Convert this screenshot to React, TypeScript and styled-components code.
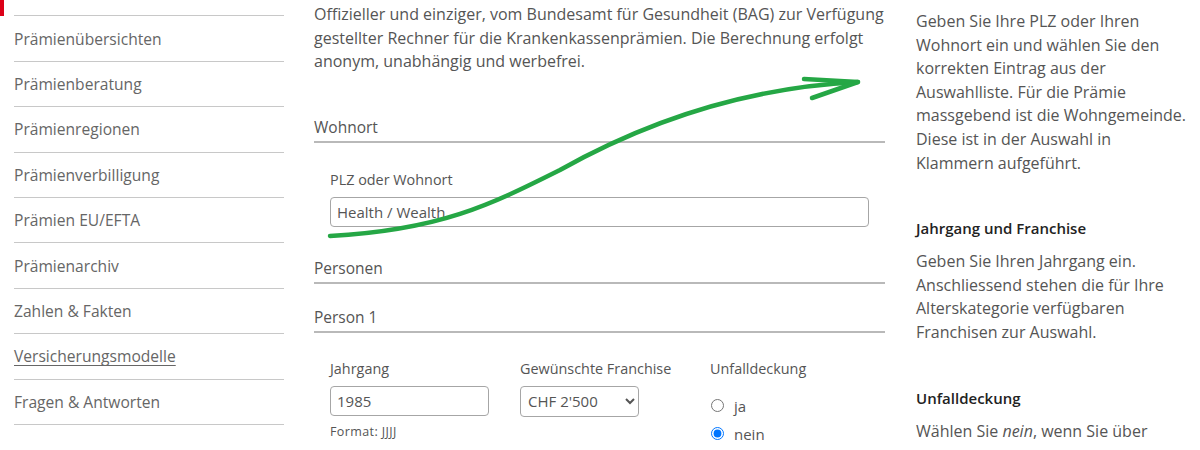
import styled, { createGlobalStyle } from 'styled-components';

const GlobalStyle = createGlobalStyle`
  body {
    margin: 0;
    background: #ffffff;
    font-family: "Open Sans", "Noto Sans", sans-serif;
    color: #555;
  }
`;

const Page = styled.div`
  position: relative;
  display: flex;
  width: 1200px;
  height: 450px;
  overflow: hidden;
  font-size: 15px;
`;

const Sidebar = styled.nav`
  width: 284px;
  flex-shrink: 0;
  margin-top: -29px;
`;

const NavItem = styled.div<{ $active?: boolean }>`
  display: flex;
  padding-left: 10px;
  border-left: 4px solid ${(p) => (p.$active ? '#dc0018' : 'transparent')};
`;

const NavLink = styled.a<{ $underline?: boolean }>`
  flex: 1;
  display: flex;
  align-items: center;
  box-sizing: border-box;
  height: 45.4px;
  border-bottom: 1px solid #c8c8c8;
  color: #666;
  font-size: 15.6px;
  text-decoration: ${(p) => (p.$underline ? 'underline' : 'none')};
  text-underline-offset: 3px;
`;

const Main = styled.main`
  width: 571px;
  flex-shrink: 0;
  margin-left: 30px;
  padding-top: 3px;
`;

const Intro = styled.p`
  margin: 0;
  font-size: 16px;
  line-height: 23.5px;
  color: #555;
`;

const SectionTitle = styled.div<{ $gap: number }>`
  margin-top: ${(p) => p.$gap}px;
  font-size: 15.5px;
  line-height: 23px;
  padding-bottom: 2px;
  border-bottom: 2px solid #b9b9b9;
  color: #555;
`;

const Field = styled.div<{ $gap?: number }>`
  margin-top: ${(p) => p.$gap ?? 0}px;
  padding: 0 16px;
`;

const Label = styled.div`
  font-size: 14.4px;
  line-height: 23px;
  margin-bottom: 6px;
  color: #555;
`;

const TextInput = styled.input<{ $width?: number }>`
  box-sizing: border-box;
  width: ${(p) => (p.$width ? `${p.$width}px` : '100%')};
  height: 30px;
  padding: 0 6px;
  border: 1px solid #a6a6a6;
  border-radius: 4px;
  font-family: inherit;
  font-size: 15px;
  color: #555;
  background: #fff;
`;

const Row = styled.div`
  display: flex;
  gap: 31px;
  margin-top: 24px;
  padding: 0 16px;
`;

const Col = styled.div<{ $width: number }>`
  width: ${(p) => p.$width}px;
`;

const Hint = styled.div`
  margin-top: 8px;
  font-size: 12.5px;
  line-height: 16px;
  letter-spacing: 0.4px;
  color: #555;
`;

const Select = styled.select`
  box-sizing: border-box;
  width: 119px;
  height: 31px;
  padding: 0 3px;
  border: 1px solid #a6a6a6;
  border-radius: 4px;
  font-family: inherit;
  font-size: 15px;
  color: #555;
  background: #fff;
`;

const RadioGroup = styled.div`
  margin-top: 12px;
`;

const RadioRow = styled.label`
  display: flex;
  align-items: center;
  gap: 10px;
  height: 28px;
  color: #555;

  input {
    width: 13px;
    height: 13px;
    margin: 0 0 0 1px;
  }
`;

const Aside = styled.aside`
  width: 280px;
  flex-shrink: 0;
  margin-left: 31px;
  padding-top: 10px;
`;

const HelpText = styled.p`
  margin: 0;
  font-size: 16px;
  line-height: 23.6px;
  color: #555;
  white-space: nowrap;
`;

const HelpTitle = styled.h3`
  margin: 41px 0 10px;
  font-size: 15px;
  line-height: 24px;
  font-weight: 600;
  color: #222;
`;

const Overlay = styled.svg`
  position: absolute;
  left: 0;
  top: 0;
  pointer-events: none;
`;

const navItems = [
  'Prämienrechner',
  'Prämienübersichten',
  'Prämienberatung',
  'Prämienregionen',
  'Prämienverbilligung',
  'Prämien EU/EFTA',
  'Prämienarchiv',
  'Zahlen & Fakten',
  'Versicherungsmodelle',
  'Fragen & Antworten',
];

function App() {
  return (
    <Page>
      <GlobalStyle />
      <Sidebar>
        {navItems.map((item, i) => (
          <NavItem key={item} $active={i === 0}>
            <NavLink $underline={item === 'Versicherungsmodelle'}>{item}</NavLink>
          </NavItem>
        ))}
      </Sidebar>

      <Main>
        <Intro>
          Offizieller und einziger, vom Bundesamt für Gesundheit (BAG) zur Verfügung
          <br />
          gestellter Rechner für die Krankenkassenprämien. Die Berechnung erfolgt
          <br />
          anonym, unabhängig und werbefrei.
        </Intro>

        <SectionTitle $gap={42}>Wohnort</SectionTitle>
        <Field $gap={25}>
          <Label>PLZ oder Wohnort</Label>
          <TextInput defaultValue="Health / Wealth" />
        </Field>

        <SectionTitle $gap={30}>Personen</SectionTitle>
        <SectionTitle $gap={22}>Person 1</SectionTitle>

        <Row>
          <Col $width={159}>
            <Label>Jahrgang</Label>
            <TextInput defaultValue="1985" />
            <Hint>Format: JJJJ</Hint>
          </Col>
          <Col $width={159}>
            <Label>Gewünschte Franchise</Label>
            <Select defaultValue="2500">
              <option value="2500">CHF 2'500</option>
            </Select>
          </Col>
          <Col $width={150}>
            <Label>Unfalldeckung</Label>
            <RadioGroup>
              <RadioRow>
                <input type="radio" name="unfall" /> ja
              </RadioRow>
              <RadioRow>
                <input type="radio" name="unfall" defaultChecked /> nein
              </RadioRow>
            </RadioGroup>
          </Col>
        </Row>
      </Main>

      <Aside>
        <HelpText>
          Geben Sie Ihre PLZ oder Ihren
          <br />
          Wohnort ein und wählen Sie den
          <br />
          korrekten Eintrag aus der
          <br />
          Auswahlliste. Für die Prämie
          <br />
          massgebend ist die Wohngemeinde.
          <br />
          Diese ist in der Auswahl in
          <br />
          Klammern aufgeführt.
        </HelpText>
        <HelpTitle>Jahrgang und Franchise</HelpTitle>
        <HelpText>
          Geben Sie Ihren Jahrgang ein.
          <br />
          Anschliessend stehen die für Ihre
          <br />
          Alterskategorie verfügbaren
          <br />
          Franchisen zur Auswahl.
        </HelpText>
        <HelpTitle>Unfalldeckung</HelpTitle>
        <HelpText>
          Wählen Sie <em>nein</em>, wenn Sie über
        </HelpText>
      </Aside>

      <Overlay width="1200" height="450" viewBox="0 0 1200 450">
        <g fill="none" stroke="#25a745" strokeWidth="4.5" strokeLinecap="round" strokeLinejoin="round">
          <path d="M330 236 C440 230 490 205 560 170 C640 125 740 88 858 82" />
          <path d="M804 79 L858 82 L812 98" />
        </g>
      </Overlay>
    </Page>
  );
}

export default App;
